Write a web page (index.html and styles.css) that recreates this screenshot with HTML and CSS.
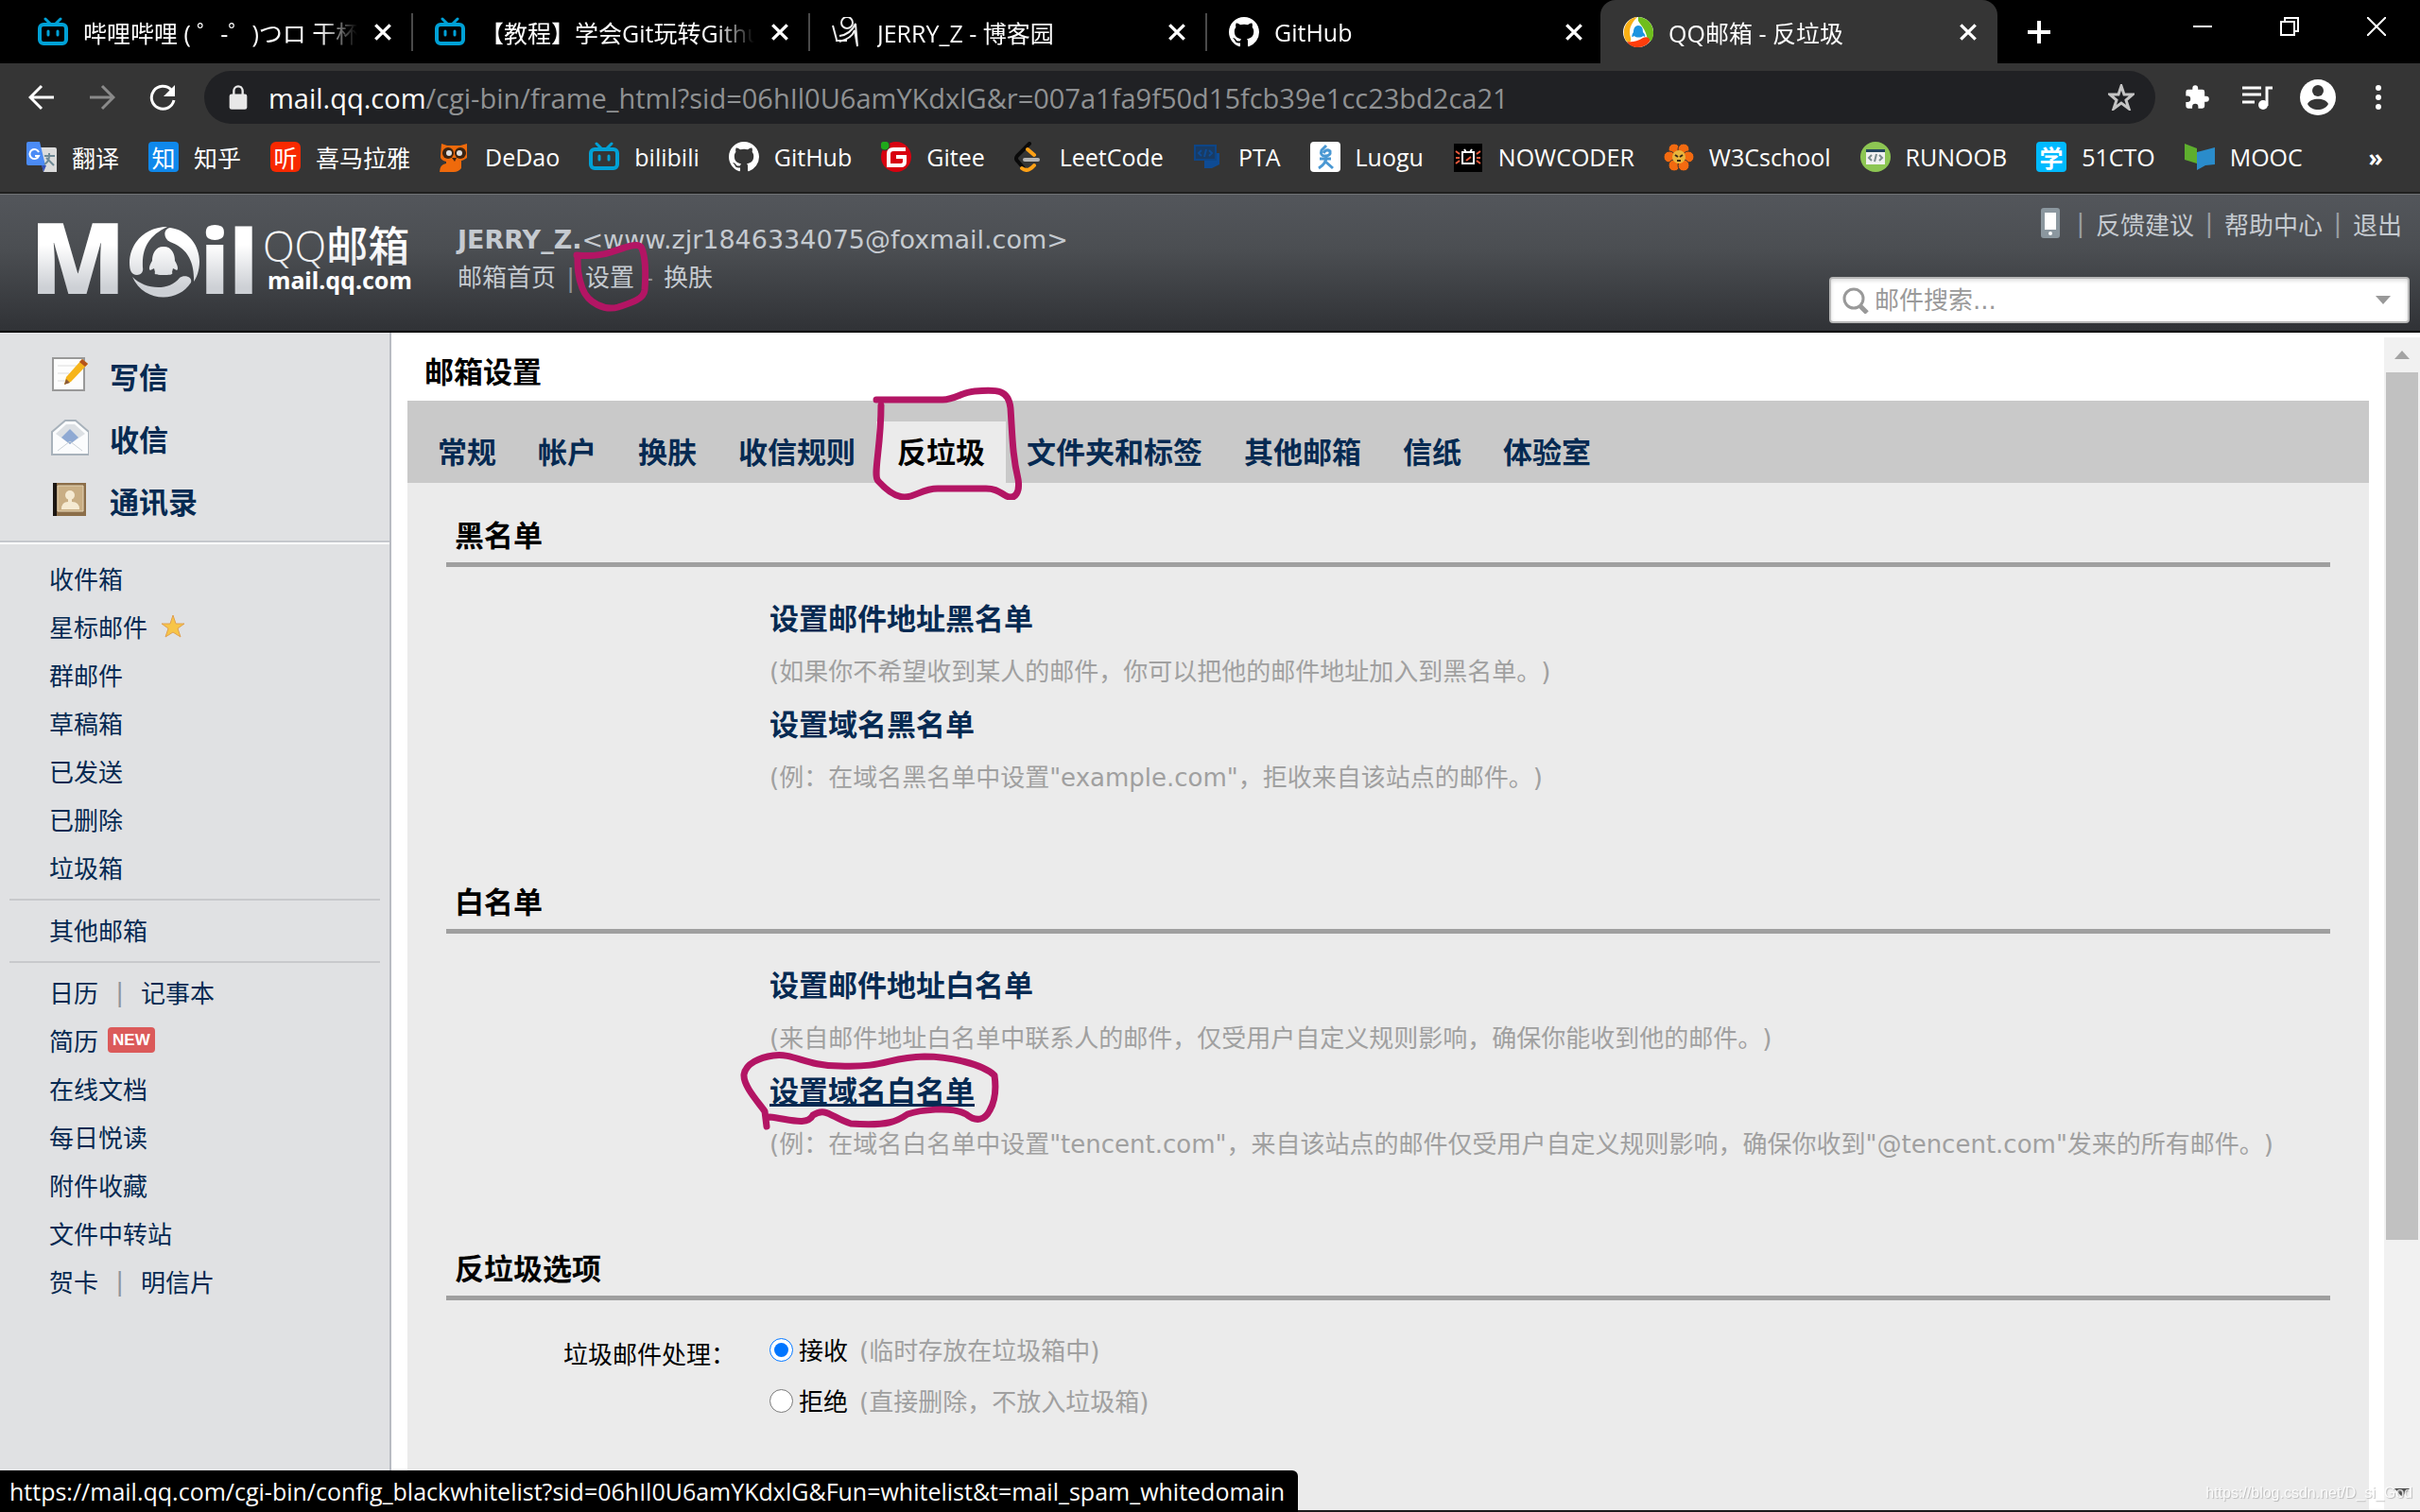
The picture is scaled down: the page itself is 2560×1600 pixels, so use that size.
FILE: index.html
```
<!DOCTYPE html>
<html lang="zh-CN">
<head>
    <meta charset="UTF-8">
    <meta name="viewport" content="width=device-width, initial-scale=1.0">
    <title>QQ邮箱 - 反垃圾</title>
    <link rel="stylesheet" href="styles.css">
</head>
<body>
    <!-- shared icons -->
    <svg class="defs" aria-hidden="true">
        <symbol id="bili" viewBox="0 0 32 32">
            <g fill="none" stroke="#00a1d6" stroke-linecap="round" stroke-linejoin="round">
                <rect x="2" y="8" width="28" height="20" rx="4" stroke-width="4"/>
                <path d="M8 2l5 5M24 2l-5 5" stroke-width="3"/>
                <path d="M11 15v4M21 15v4" stroke-width="3"/>
            </g>
        </symbol>
        <symbol id="github" viewBox="0 0 16 16">
            <path fill="#fff" d="M8 0C3.58 0 0 3.58 0 8c0 3.54 2.29 6.53 5.47 7.59.4.07.55-.17.55-.38 0-.19-.01-.82-.01-1.49-2.01.37-2.53-.49-2.69-.94-.09-.23-.48-.94-.82-1.13-.28-.15-.68-.52-.01-.53.63-.01 1.08.58 1.23.82.72 1.21 1.87.87 2.33.66.07-.52.28-.87.51-1.07-1.78-.2-3.64-.89-3.64-3.95 0-.87.31-1.59.82-2.15-.08-.2-.36-1.02.08-2.12 0 0 .67-.21 2.2.82.64-.18 1.32-.27 2-.27s1.36.09 2 .27c1.53-1.04 2.2-.82 2.2-.82.44 1.1.16 1.92.08 2.12.51.56.82 1.27.82 2.15 0 3.07-1.87 3.75-3.65 3.95.29.25.54.73.54 1.48 0 1.07-.01 1.93-.01 2.2 0 .21.15.46.55.38A8.01 8.01 0 0 0 16 8c0-4.42-3.58-8-8-8z"/>
        </symbol>
        <symbol id="cross" viewBox="0 0 20 20">
            <path d="M3 3l14 14M17 3L3 17" stroke="#fff" stroke-width="3"/>
        </symbol>
    </svg>

    <div class="tabstrip">
        <div class="tab">
            <svg class="fav"><use href="#bili"/></svg>
            <span class="tab-title">哔哩哔哩 ( ゜-゜)つロ 干杯~</span>
            <button class="tab-close" aria-label="关闭"><svg><use href="#cross"/></svg></button>
        </div>
        <div class="tab">
            <svg class="fav"><use href="#bili"/></svg>
            <span class="tab-title">【教程】学会Git玩转Github</span>
            <button class="tab-close" aria-label="关闭"><svg><use href="#cross"/></svg></button>
        </div>
        <div class="tab">
            <svg class="fav" viewBox="0 0 32 32" fill="none" stroke="#eee">
                <circle cx="16" cy="6" r="6" stroke-width="2"/>
                <path d="M1 9l4 15M4 25h12M8 20c7-1 13-4 17-13l2 24-3-17c-2 6-8 10-16 12" stroke-width="2"/>
            </svg>
            <span class="tab-title">JERRY_Z - 博客园</span>
            <button class="tab-close" aria-label="关闭"><svg><use href="#cross"/></svg></button>
        </div>
        <div class="tab last">
            <svg class="fav"><use href="#github"/></svg>
            <span class="tab-title">GitHub</span>
            <button class="tab-close" aria-label="关闭"><svg><use href="#cross"/></svg></button>
        </div>
        <div class="tab active">
            <svg class="fav" viewBox="0 0 32 32">
                <circle cx="16" cy="16" r="16" fill="#fff"/>
                <path d="M15 0C4 1-3 14 3 25c4 3 6 1 5-3C5 13 9 6 15 0z" fill="#f9b015"/>
                <path d="M16 0c15 1 19 16 14 25-3 1-4 0-5-5C23 12 18 8 16 4z" fill="#6fbe1d"/>
                <path d="M4 26c5 1 11 0 17-4 4-2 8 0 7 4-6 8-19 8-24 0z" fill="#ff3d0c"/>
                <path d="M16 9c-4 0-5 4-5 7-2 3-2 5-1 5l2-1c1 2 8 2 9 0l2 1c1-1 0-3-2-5 0-4-1-7-5-7z" fill="#1d95e0"/>
            </svg>
            <span class="tab-title">QQ邮箱 - 反垃圾</span>
            <button class="tab-close" aria-label="关闭"><svg><use href="#cross"/></svg></button>
        </div>
        <button class="new-tab" aria-label="新标签页"><svg viewBox="0 0 24 24"><path d="M12 0v24M0 12h24" stroke="#fff" stroke-width="4"/></svg></button>
        <div class="win-btns">
            <button aria-label="最小化"><svg viewBox="0 0 20 20"><path d="M0 10h20" stroke="#fff" stroke-width="2"/></svg></button>
            <button aria-label="还原"><svg viewBox="0 0 20 20" fill="none" stroke="#fff" stroke-width="2"><path d="M1 5h14v14H1zM5 5V1h14v14h-4"/></svg></button>
            <button aria-label="关闭窗口"><svg viewBox="0 0 20 20"><path d="M0 0l20 20M20 0L0 20" stroke="#fff" stroke-width="2"/></svg></button>
        </div>
    </div>

    <div class="toolbar">
        <button aria-label="后退"><svg viewBox="0 0 28 28" fill="none" stroke="#fff" stroke-width="3"><path d="M27 14H3M14 2L2 14l12 12"/></svg></button>
        <button aria-label="前进"><svg viewBox="0 0 28 28" fill="none" stroke="#8a8a8a" stroke-width="3"><path d="M1 14h24M14 2l12 12-12 12"/></svg></button>
        <button aria-label="刷新"><svg viewBox="0 0 28 28"><path d="M23 6a12 12 0 1 0 3 11" fill="none" stroke="#fff" stroke-width="3"/><path d="M27 1v12H15z" fill="#fff"/></svg></button>
        <div class="omnibox">
            <svg class="lock" viewBox="0 0 18 24"><rect x="1" y="9" width="16" height="14" rx="2" fill="#e8e8e8"/><path d="M5 10V6a4 4 0 0 1 8 0v4" fill="none" stroke="#e8e8e8" stroke-width="2"/></svg>
            <div class="url" role="textbox" aria-label="地址">mail.qq.com<span>/cgi-bin/frame_html?sid=06hIl0U6amYKdxlG&amp;r=007a1fa9f50d15fcb39e1cc23bd2ca21</span></div>
            <button aria-label="收藏"><svg viewBox="0 0 28 28" fill="none" stroke="#c4c4c4" stroke-width="3"><path d="M14 2l3 9h9l-7 6 3 9-8-6-8 6 3-9-7-6h9z"/></svg></button>
        </div>
        <div class="actions">
            <button aria-label="扩展程序"><svg viewBox="0 0 24 24" fill="#fff"><path d="M20.500 11H19V7a2 2 0 0 0-2-2h-4V3.500a2.500 2.500 0 0 0-5 0V5H4a2 2 0 0 0-2 2v3.800h1.500a2.700 2.700 0 0 1 0 5.400H2V20a2 2 0 0 0 2 2h3.800v-1.500a2.700 2.700 0 0 1 5.400 0V22H17a2 2 0 0 0 2-2v-4h1.500a2.500 2.500 0 0 0 0-5z"/></svg></button>
            <button aria-label="媒体控制"><svg class="wide" viewBox="0 0 32 26"><path d="M0 3h20M0 10h20M0 18h13M26 22V3h6" fill="none" stroke="#fff" stroke-width="3"/><circle cx="22" cy="21" r="5" fill="#fff"/></svg></button>
            <button aria-label="用户"><svg class="avatar" viewBox="0 0 38 38"><circle cx="19" cy="19" r="19" fill="#fff"/><circle cx="19" cy="12" r="6" fill="#353535"/><path d="M8 26c3-7 19-7 22 0-4 8-18 8-22 0z" fill="#353535"/></svg></button>
            <button aria-label="菜单"><svg viewBox="0 0 28 28" fill="#fff"><circle cx="14" cy="4" r="3"/><circle cx="14" cy="14" r="3"/><circle cx="14" cy="24" r="3"/></svg></button>
        </div>
    </div>

    <nav class="bookmarks">
        <a href="#"><svg class="fav" viewBox="0 0 32 32"><path d="M12 6h18q2 0 2 2v24H18z" fill="#dcdcdc"/><path d="M0 2q0-2 2-2h12l6 25H2q-2 0-2-2z" fill="#4b8bf5"/><path d="M16 25h5l-3 7z" fill="#3551b5"/><path d="M13 11a5 5 0 1 0 0 4H9" fill="none" stroke="#fff" stroke-width="2"/><path d="M19 15h11M24 12v3c0 4-2 7-5 9M21 17l8 8" stroke="#6f8a96" stroke-width="2" fill="none"/></svg>翻译</a>
        <a href="#"><span class="fav box zhihu">知</span>知乎</a>
        <a href="#"><span class="fav box ting">听</span>喜马拉雅</a>
        <a href="#"><svg class="fav" viewBox="0 0 32 32"><path d="M2 2l6 2h14l7-2v15q-4 3-6 3v8q-3 4-8 4H0q0-8 7-9v-2q-7-2-6-6z" fill="#ef6a0b"/><circle cx="9" cy="12" r="6" fill="#3a2412"/><circle cx="22" cy="12" r="6" fill="#3a2412"/><circle cx="10" cy="12" r="3" fill="#ddd"/><circle cx="21" cy="12" r="3" fill="#ddd"/><path d="M13 17h5l-2 4z" fill="#3a2412"/></svg>DeDao</a>
        <a href="#"><svg class="fav"><use href="#bili"/></svg>bilibili</a>
        <a href="#"><svg class="fav"><use href="#github"/></svg>GitHub</a>
        <a href="#"><svg class="fav" viewBox="0 0 32 32"><circle cx="16" cy="16" r="16" fill="#d8000f"/><path d="M26 8H13q-5 0-5 5v12h13q4 0 4-4v-5h-9" fill="none" stroke="#fff" stroke-width="4"/><circle cx="4" cy="4" r="5" fill="#1fa81b" stroke="#353535"/></svg>Gitee</a>
        <a href="#"><svg class="fav" viewBox="0 0 32 32" fill="none" stroke-width="4" stroke-linecap="round"><path d="M10 28l-7-8q-2-2 0-5L16 2" stroke="#0a0a0a"/><path d="M14 8l7 6M8 28q6 5 13-3" stroke="#ffa116"/><path d="M11 19h14" stroke="#b3b3b3"/></svg>LeetCode</a>
        <a href="#"><svg class="fav" viewBox="0 0 32 32"><path d="M12 12h16v12l-8 4h-8z" fill="#0e4b94"/><path d="M2 4h22v15H2z" fill="#193b63" stroke="#0d4587" stroke-width="2"/><path d="M9 9l-3 3 3 3M17 9l3 3-3 3M14 8l-2 8" fill="none" stroke="#0e4b94" stroke-width="2"/></svg>PTA</a>
        <a href="#"><svg class="fav" viewBox="0 0 32 32"><rect width="32" height="32" rx="4" fill="#fff"/><path d="M17 4l-5 5q-2 6 4 6 6 0 5-5-4-3-7 2M10 18h12M17 16c0 6-3 9-8 12M15 20l9 8" fill="none" stroke="#4a98d3" stroke-width="3"/></svg>Luogu</a>
        <a href="#"><svg class="fav" viewBox="0 0 32 32"><path d="M1 2h30v30H1z" fill="#000"/><path d="M10 11h12v12H10zM12 8l2 3M20 8l-2 3" fill="none" stroke="#fff" stroke-width="2"/><path d="M3 10l4 3M3 17h4M3 23l4-3M29 10l-4 3M29 17h-4M29 23l-4-3M14 20l5-4" stroke="#f15b3d" stroke-width="2"/></svg>NOWCODER</a>
        <a href="#"><svg class="fav" viewBox="0 0 32 32"><g fill="#f36a10" stroke="#353535"><circle cx="11" cy="8" r="6"/><circle cx="21" cy="8" r="6"/><circle cx="6" cy="16" r="6"/><circle cx="26" cy="16" r="6"/><circle cx="11" cy="25" r="6"/><circle cx="21" cy="25" r="6"/></g><circle cx="16" cy="16" r="7" fill="#e9b53c"/><path d="M12 14l3 2M20 14l-3 2M14 20h4" stroke="#352616" stroke-width="2"/></svg>W3Cschool</a>
        <a href="#"><svg class="fav" viewBox="0 0 32 32"><circle cx="16" cy="16" r="16" fill="#8dc653"/><path d="M6 9h20v15H6z" fill="#f0f0f0"/><path d="M6 8h20v3H6z" fill="#24455e"/><path d="M12 14l-3 3 3 3M20 14l3 3-3 3M17 13l-2 8" fill="none" stroke="#7b8b8d" stroke-width="2"/></svg>RUNOOB</a>
        <a href="#"><span class="fav box cto">学</span>51CTO</a>
        <a href="#"><svg class="fav" viewBox="0 0 32 32"><path d="M0 2l13 5v16L0 19z" fill="#5eae2e"/><path d="M13 11l19-5v18l-10 1-9 5z" fill="#2a8ccb"/></svg>MOOC</a>
        <button class="more" aria-label="更多书签">»</button>
    </nav>

    <header class="header">
        <svg class="logo" viewBox="0 0 410 90" role="img" aria-label="QQ邮箱">
            <defs>
                <linearGradient id="silver" x1="0" y1="0" x2="0" y2="90" gradientUnits="userSpaceOnUse">
                    <stop offset="0.3" stop-color="#fff"/>
                    <stop offset="0.8" stop-color="#cdd0d5"/>
                </linearGradient>
            </defs>
            <g fill="url(#silver)">
                <text class="logo-m" x="-4" y="79">M</text>
                <path d="M141 8c-24 0-40 18-40 38 0 8 2 13 8 13 4 0 7-3 6-8-1-19 5-33 26-43z"/>
                <path d="M144 9c18 2 31 18 31 36 0 9-3 17-6 21 1-22-8-36-25-42-8-4-7-14 0-15z"/>
                <path d="M104 61c13 13 38 16 50 1 5-4 14-1 12 5-14 22-50 21-62-6z"/>
                <path d="M137 29c-9 0-12 8-12 15-3 5-4 9-2 10l4-2 1 4c-2 3 4 3 9 3s11 0 9-3l1-4 4 2c2-1 1-5-2-10 0-7-3-15-12-15z"/>
                <text class="logo-big" x="176" y="79">il</text>
                <text class="logo-cn" x="242" y="45">QQ<tspan class="cn-bold">邮箱</tspan></text>
                <text class="logo-url" x="247" y="74" fill="#fff">mail.qq.com</text>
            </g>
        </svg>
        <div class="user">
            <div class="address"><b>JERRY_Z.</b>&lt;www.zjr1846334075@foxmail.com&gt;</div>
            <div class="user-nav">
                <a href="#">邮箱首页</a><i>|</i><a href="#" class="marked">设置<svg class="mark mark-set" viewBox="0 0 86 84"><path d="M8 18q20 2 36-3c18-6 30-11 33-4 4 10 4 30 3 44-1 10-16 14-28 18-14 4-32-4-38-20C9 40 9 30 9 19"/></svg></a><i>-</i><a href="#">换肤</a>
            </div>
        </div>
        <div class="header-right">
            <div class="links">
                <svg class="phone" viewBox="0 0 20 32"><rect width="20" height="32" rx="3" fill="#8b979f"/><path d="M4 5h12v18H4z" fill="#fff"/><circle cx="10" cy="27" r="2" fill="#fff"/></svg>
                <i>|</i><a href="#">反馈建议</a><i>|</i><a href="#">帮助中心</a><i>|</i><a href="#">退出</a>
            </div>
            <div class="search">
                <svg viewBox="0 0 28 28" fill="none" stroke="#999"><circle cx="12" cy="12" r="10" stroke-width="3"/><path d="M18 19l8 8" stroke-width="5"/></svg>
                <input type="text" placeholder="邮件搜索..." aria-label="邮件搜索">
                <button class="drop" aria-label="高级搜索"></button>
            </div>
        </div>
    </header>

    <div class="main">
        <aside class="sidebar">
            <div class="primary">
                <a href="#"><svg viewBox="0 0 40 40"><path d="M2 2h33v34H2z" fill="#fdfdfd" stroke="#999" stroke-width="2"/><path d="M7 10h20M7 18h12M7 26h8" stroke="#ddd"/><path d="M33 3l6 5-18 19-7 3 2-8z" fill="#f6b51b"/><path d="M33 3l6 5-3 3-6-5z" fill="#b5541c"/><path d="M14 30l2-6 4 4z" fill="#8a5a3a"/></svg>写信</a>
                <a href="#"><svg viewBox="0 0 40 40"><path d="M1 14L15 2h11l14 12v24H1z" fill="#fbfcfd" stroke="#a8b2bb" stroke-width="2"/><path d="M5 16L16 6h9l11 10-16 11z" fill="#dce0e4"/><path d="M20 11l9 9-9 7-9-7z" fill="#8ea9d3"/><path d="M7 34l13-10 13 10" fill="none" stroke="#ccd2d8"/></svg>收信</a>
                <a href="#"><svg viewBox="0 0 40 40"><path d="M2 2h35v35H2z" fill="#8c6e49"/><path d="M7 5h27v27H7z" fill="#c9ae84" stroke="#e5d6b8"/><path d="M2 2h4v35H2z" fill="#1c1612"/><circle cx="20" cy="15" r="5" fill="#f5ead2"/><path d="M11 30q0-8 7-8v-4h4v4q8 0 8 8z" fill="#f5ead2"/></svg>通讯录</a>
            </div>
            <ul class="folders">
                <li><a href="#">收件箱</a></li>
                <li><a href="#">星标邮件</a><svg class="star" viewBox="0 0 26 26"><path d="M13 1l3 9h9l-7 5 3 9-8-5-8 5 3-9-7-5h9z" fill="#f7c548" stroke="#e0a050"/></svg></li>
                <li><a href="#">群邮件</a></li>
                <li><a href="#">草稿箱</a></li>
                <li><a href="#">已发送</a></li>
                <li><a href="#">已删除</a></li>
                <li><a href="#">垃圾箱</a></li>
            </ul>
            <ul class="folders">
                <li><a href="#">其他邮箱</a></li>
            </ul>
            <ul class="folders">
                <li><a href="#">日历</a><i>|</i><a href="#">记事本</a></li>
                <li><a href="#">简历</a><span class="new">NEW</span></li>
                <li><a href="#">在线文档</a></li>
                <li><a href="#">每日悦读</a></li>
                <li><a href="#">附件收藏</a></li>
                <li><a href="#">文件中转站</a></li>
                <li><a href="#">贺卡</a><i>|</i><a href="#">明信片</a></li>
            </ul>
        </aside>

        <main class="content">
            <h1>邮箱设置</h1>
            <nav class="set-tabs">
                <a href="#">常规</a>
                <a href="#">帐户</a>
                <a href="#">换肤</a>
                <a href="#">收信规则</a>
                <a href="#" class="on marked">反垃圾<svg class="mark mark-tab" viewBox="0 0 170 120"><path d="M9 14h70c14 0 20-8 34-9 24-2 36-2 38 18 2 30 2 50 8 75 2 12-2 24-14 17-8-5-12-7-20-7H74c-16 0-24 9-35 9-10 0-20-8-28-17-6-6 3-34 3-80"/></svg></a>
                <a href="#">文件夹和标签</a>
                <a href="#">其他邮箱</a>
                <a href="#">信纸</a>
                <a href="#">体验室</a>
            </nav>
            <div class="panel">
                <section>
                    <h2>黑名单</h2>
                    <div class="items">
                        <a href="#">设置邮件地址黑名单</a>
                        <p>(如果你不希望收到某人的邮件，你可以把他的邮件地址加入到黑名单。)</p>
                        <a href="#">设置域名黑名单</a>
                        <p>(例：在域名黑名单中设置"example.com"，拒收来自该站点的邮件。)</p>
                    </div>
                </section>
                <section>
                    <h2>白名单</h2>
                    <div class="items">
                        <a href="#">设置邮件地址白名单</a>
                        <p>(来自邮件地址白名单中联系人的邮件，仅受用户自定义规则影响，确保你能收到他的邮件。)</p>
                        <a href="#" class="marked hover">设置域名白名单<svg class="mark mark-domain" viewBox="0 0 280 88"><path d="M31 81l-2-16C22 55 6 38 7 26 9 14 24 8 38 6c22-3 34 11 70 11 50 2 50-9 90-10 26 0 62 8 74 20 2 14 0 28-5 37-5 10-14 13-25 4-16-9-50-4-62 0-10 7-20 13-60 10-20-6-26-18-40-9-6 12-26 4-46 2"/></svg></a>
                        <p>(例：在域名白名单中设置"tencent.com"，来自该站点的邮件仅受用户自定义规则影响，确保你收到"@tencent.com"发来的所有邮件。)</p>
                    </div>
                </section>
                <section>
                    <h2>反垃圾选项</h2>
                    <div class="options">
                        <span class="opt-label">垃圾邮件处理：</span>
                        <div>
                            <label><input type="radio" name="spam" checked>接收<em>(临时存放在垃圾箱中)</em></label>
                            <label><input type="radio" name="spam">拒绝<em>(直接删除，不放入垃圾箱)</em></label>
                        </div>
                    </div>
                </section>
            </div>
        </main>

        <div class="scrollbar">
            <i class="up"></i>
            <div class="thumb"></div>
            <i class="down"></i>
        </div>
    </div>

    <div class="status">https://mail.qq.com/cgi-bin/config_blackwhitelist?sid=06hIl0U6amYKdxlG&amp;Fun=whitelist&amp;t=mail_spam_whitedomain</div>
    <div class="watermark">https://blog.csdn.net/D_si_God</div>
</body>
</html>
```
FILE: styles.css
```
* {
    box-sizing: border-box;
}

body {
    margin: 0;
    height: 100vh;
    overflow: hidden;
    display: flex;
    flex-direction: column;
    background: #fff;
    font-family: "DejaVu Sans", "Noto Sans CJK SC", sans-serif;
    font-size: 26px;
    text-spacing-trim: space-all;
    border-bottom: 2px solid #1c1c1c;
}

a {
    color: inherit;
    text-decoration: none;
}

i, em {
    font-style: normal;
}

button {
    background: none;
    border: none;
    padding: 0;
    color: inherit;
    font: inherit;
    display: flex;
    align-items: center;
    justify-content: center;
    cursor: pointer;
}

.defs {
    display: none;
}

.fav {
    width: 32px;
    height: 32px;
    flex: none;
}

/* browser tabs */
.tabstrip, .toolbar, .bookmarks, .status {
    font-family: "Open Sans", "Noto Sans CJK SC", sans-serif;
    color: #fff;
    flex: none;
}

.tabstrip {
    height: 67px;
    background: #000;
    display: flex;
    padding-left: 16px;
    font-size: 25px;
}

.tab {
    position: relative;
    width: 420px;
    padding: 0 20px 0 24px;
    display: flex;
    align-items: center;
    gap: 16px;
}

.tab::after {
    content: "";
    position: absolute;
    right: -1px;
    top: 14px;
    width: 2px;
    height: 40px;
    background: #4a4a4a;
}

.tab.last::after, .tab.active::after {
    display: none;
}

.tab.active {
    margin-left: -3px;
    background: #353535;
    border-radius: 16px 16px 0 0;
}

.tab-title {
    flex: 1;
    overflow: hidden;
    white-space: nowrap;
    mask-image: linear-gradient(to right, #000 86%, transparent);
}

.tab-close svg {
    width: 22px;
    height: 22px;
}

.new-tab {
    width: 88px;
}

.new-tab svg {
    width: 24px;
    height: 24px;
}

.win-btns {
    margin-left: auto;
    height: 56px;
    display: flex;
}

.win-btns button {
    width: 92px;
}

.win-btns svg {
    width: 20px;
    height: 20px;
}

/* address bar */
.toolbar {
    height: 72px;
    background: #353535;
    display: flex;
    align-items: center;
    padding: 0 12px;
}

.toolbar button {
    width: 64px;
    height: 56px;
}

.toolbar svg {
    width: 28px;
    height: 28px;
}

.omnibox {
    flex: 1;
    height: 56px;
    margin-left: 12px;
    padding: 0 4px 0 24px;
    border-radius: 28px;
    background: #202124;
    display: flex;
    align-items: center;
    gap: 20px;
    font-size: 29px;
}

.omnibox .lock {
    width: 24px;
}

.url {
    flex: 1;
    white-space: nowrap;
    overflow: hidden;
}

.url span {
    color: #8f9193;
}

.actions {
    display: flex;
    padding-left: 12px;
}

.toolbar .wide {
    width: 32px;
}

.toolbar .avatar {
    width: 38px;
    height: 38px;
}

.bookmarks {
    height: 66px;
    padding: 0 28px 10px;
    background: #353535;
    border-bottom: 2px solid #202020;
    display: flex;
    align-items: center;
    gap: 31px;
    font-size: 25px;
}

.bookmarks a {
    display: flex;
    align-items: center;
    gap: 16px;
    white-space: nowrap;
}

.more {
    margin-left: auto;
    padding: 0 11px;
    font-weight: bold;
}

.box {
    display: flex;
    align-items: center;
    justify-content: center;
    border-radius: 4px;
}

.zhihu {
    background: #0f88eb;
}

.ting {
    background: #f82900;
    border-radius: 6px;
}

.cto {
    background: #00baff;
    font-weight: bold;
}

/* mail header */
.header {
    flex: none;
    height: 147px;
    padding: 0 18px 0 36px;
    background: linear-gradient(#53565b, #4b4e52 40%, #303236);
    border-top: 1px solid #707276;
    border-bottom: 2px solid #000;
    color: #c5cad0;
    display: flex;
}

.logo {
    width: 410px;
    height: 90px;
    margin-top: 26px;
    overflow: visible;
}

.logo-m {
    font: 800 104px "Open Sans", sans-serif;
}

.logo-big {
    font: 800 94px "Open Sans", sans-serif;
}

.logo-cn {
    font: 300 44px "Open Sans", "Noto Sans CJK SC", sans-serif;
}

.cn-bold {
    font-weight: 500;
}

.logo-url {
    font: bold 25px "Noto Sans", sans-serif;
}

.user {
    flex: 1;
    margin-left: 38px;
    padding-top: 28px;
    line-height: 40px;
    white-space: nowrap;
}

.address {
    font-size: 27px;
}

.user-nav {
    display: flex;
}

.user-nav i {
    width: 31px;
    text-align: center;
    color: #8f9296;
}

.header-right {
    width: 614px;
    margin-right: -7px;
    padding-top: 10px;
}

.links {
    display: flex;
    justify-content: flex-end;
    align-items: center;
    height: 40px;
    padding-right: 8px;
}

.links i {
    width: 32px;
    text-align: center;
    color: #9a9da1;
}

.phone {
    width: 20px;
    height: 32px;
    margin-right: 6px;
}

.search {
    margin-top: 37px;
    height: 49px;
    padding: 0 18px 0 12px;
    border: 2px solid #b8b8b8;
    border-radius: 4px;
    background: #fff;
    box-shadow: inset 0 2px 4px #ddd;
    display: flex;
    align-items: center;
    gap: 6px;
}

.search svg {
    width: 28px;
    height: 28px;
}

.search input {
    flex: 1;
    min-width: 0;
    border: none;
    outline: none;
    padding: 0;
    background: none;
    font: inherit;
}

.search input::placeholder {
    color: #9a9a9a;
}

.drop {
    border: 8px solid transparent;
    border-top: 9px solid #999;
    border-bottom: 0;
}

/* page body */
.main {
    flex: 1;
    min-height: 0;
    display: flex;
}

.sidebar {
    flex: none;
    width: 414px;
    background: #e0e1e3;
    border-right: 2px solid #b8bbc2;
    color: #062a52;
}

.primary {
    padding: 12px 0 10px;
    border-bottom: 2px solid #c5c8cd;
    box-shadow: 0 2px #fff;
}

.primary a {
    display: flex;
    align-items: center;
    gap: 22px;
    height: 66px;
    padding-left: 54px;
    font-size: 31px;
    font-weight: bold;
}

.primary svg {
    width: 40px;
    height: 40px;
}

.folders {
    list-style: none;
    margin: 0 10px;
    padding: 5px 0 8px 42px;
}

.primary + .folders {
    padding: 12px 0 8px 42px;
}

.folders + .folders {
    border-top: 2px solid #c8c9cc;
}

.folders li {
    height: 51px;
    display: flex;
    align-items: center;
}

.folders i {
    width: 45px;
    text-align: center;
    color: #8f949b;
}

.star {
    width: 26px;
    height: 26px;
    margin-left: 14px;
}

.new {
    margin-left: 10px;
    padding: 0 5px;
    border-radius: 4px;
    background: #db5a5a;
    color: #fff;
    font: bold 17px/27px "Liberation Sans", sans-serif;
}

.content {
    flex: 1;
    min-width: 0;
    padding: 0 16px 0 17px;
    display: flex;
    flex-direction: column;
}

h1, h2 {
    margin: 0;
    font-size: 31px;
    line-height: 44px;
    color: #000;
}

h1 {
    padding: 20px 18px 8px;
}

.set-tabs {
    flex: none;
    height: 87px;
    padding: 22px 10px 0;
    background: #c9c9c9;
    display: flex;
    font-size: 31px;
    font-weight: bold;
    line-height: 67px;
    color: #062a52;
}

.set-tabs a {
    height: 65px;
    padding: 0 22px;
    white-space: nowrap;
}

.set-tabs .on {
    background: #ebebeb;
    color: #000;
}

.panel {
    flex: 1;
    background: #ebebeb;
    padding: 0 41px;
    overflow: hidden;
}

h2 {
    padding: 34px 9px 6px;
    border-bottom: 5px solid #9f9f9f;
}

.items {
    padding: 27px 0 48px 342px;
    line-height: 56px;
    white-space: nowrap;
}

.items a {
    display: table;
    font-size: 31px;
    font-weight: bold;
    color: #062a52;
}

.items .hover {
    text-decoration: underline;
}

.items p {
    margin: 0;
    color: #a0a0a0;
}

.options {
    padding-top: 27px;
    display: flex;
    line-height: 54px;
}

.opt-label {
    width: 342px;
    padding: 4px 36px 0 0;
    text-align: right;
}

.options label {
    display: flex;
    align-items: center;
}

.options input {
    width: 25px;
    height: 25px;
    margin: 0 6px 4px 0;
    accent-color: #0075ff;
}

.options em {
    margin-left: 12px;
    color: #a0a0a0;
}

/* scrollbar */
.scrollbar {
    flex: none;
    width: 38px;
    margin-top: 5px;
    padding: 0 2px;
    background: #f1f1f1;
    display: flex;
    flex-direction: column;
    align-items: center;
}

.thumb {
    width: 34px;
    height: 74%;
    margin-bottom: auto;
    background: #c1c1c1;
}

.up, .down {
    border: 8px solid transparent;
}

.up {
    margin: 14px 0;
    border-top: 0;
    border-bottom: 9px solid #a3a3a3;
}

.down {
    margin: 14px 0;
    border-bottom: 0;
    border-top: 9px solid #505050;
}

/* hand-drawn marks over the links */
.marked {
    position: relative;
}

.mark {
    position: absolute;
    fill: none;
    stroke: #b31564;
    stroke-width: 7px;
    stroke-linecap: round;
    stroke-linejoin: round;
    pointer-events: none;
}

.mark-set {
    width: 86px;
    height: 84px;
    left: -17px;
    top: -22px;
}

.mark-tab {
    width: 170px;
    height: 120px;
    left: -9px;
    top: -37px;
}

.mark-domain {
    width: 280px;
    height: 88px;
    left: -34px;
    top: -16px;
}

/* link preview */
.status {
    position: absolute;
    left: 0;
    bottom: 0;
    height: 44px;
    padding: 0 14px 0 10px;
    border-top-right-radius: 6px;
    background: #000;
    font-size: 25px;
    line-height: 44px;
}

.watermark {
    position: absolute;
    right: 8px;
    bottom: 8px;
    font: 16px/24px "Liberation Sans", sans-serif;
    color: #fff;
    opacity: 0.8;
    text-shadow: 1px 1px 1px #aaa;
}
```
